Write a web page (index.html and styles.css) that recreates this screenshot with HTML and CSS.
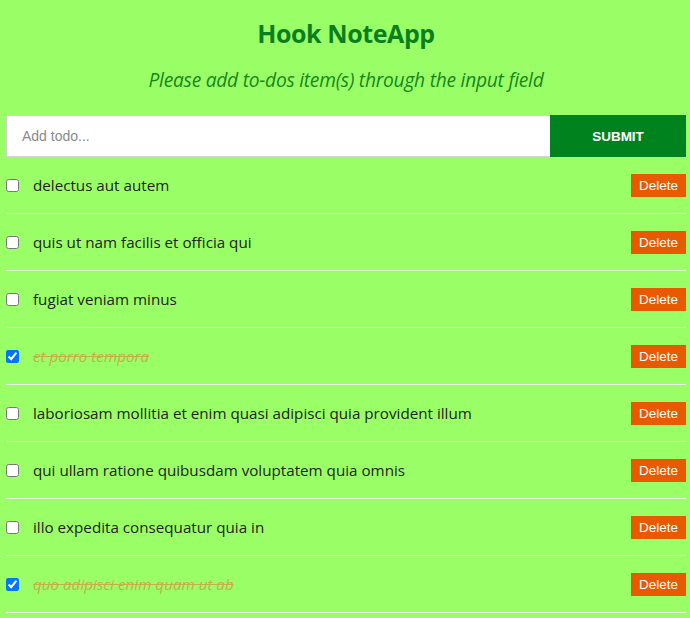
FILE: index.html
```html
<!DOCTYPE html>
<html>
<head>
<meta charset="utf-8">
<title>Hook NoteApp</title>
<link rel="stylesheet" href="styles.css">
</head>
<body>
<div class="container">
  <header class="header">
    <h1 class="title">Hook NoteApp</h1>
    <p class="subtitle">Please add to-dos item(s) through the input field</p>
  </header>
  <form class="form">
    <input class="input" type="text" placeholder="Add todo...">
    <button class="submit" type="button">SUBMIT</button>
  </form>
  <ul class="list">
    <li class="item"><input class="check" type="checkbox"><span class="text">delectus aut autem</span><button class="delete" type="button">Delete</button></li>
    <li class="item"><input class="check" type="checkbox"><span class="text">quis ut nam facilis et officia qui</span><button class="delete" type="button">Delete</button></li>
    <li class="item"><input class="check" type="checkbox"><span class="text">fugiat veniam minus</span><button class="delete" type="button">Delete</button></li>
    <li class="item"><input class="check" type="checkbox" checked><span class="text done">et porro tempora</span><button class="delete" type="button">Delete</button></li>
    <li class="item"><input class="check" type="checkbox"><span class="text">laboriosam mollitia et enim quasi adipisci quia provident illum</span><button class="delete" type="button">Delete</button></li>
    <li class="item"><input class="check" type="checkbox"><span class="text">qui ullam ratione quibusdam voluptatem quia omnis</span><button class="delete" type="button">Delete</button></li>
    <li class="item"><input class="check" type="checkbox"><span class="text">illo expedita consequatur quia in</span><button class="delete" type="button">Delete</button></li>
    <li class="item"><input class="check" type="checkbox" checked><span class="text done">quo adipisci enim quam ut ab</span><button class="delete" type="button">Delete</button></li>
  </ul>
</div>
</body>
</html>
```

FILE: styles.css
```css
html, body {
  margin: 0;
  padding: 0;
  background: #9aff67;
}
body {
  font-family: "Open Sans", "Noto Sans", sans-serif;
  color: #222;
}
.container {
  padding: 0 4px 0 6px;
}
.header {
  text-align: center;
  padding-top: 16px;
}
.title {
  margin: 0;
  font-size: 25px;
  line-height: 34px;
  font-weight: 700;
  color: #0b7f1f;
  letter-spacing: -0.4px;
}
.subtitle {
  margin: 17px 0 0;
  font-size: 19.2px;
  line-height: 26px;
  font-style: italic;
  color: #17861b;
  letter-spacing: -0.25px;
}
.form {
  display: flex;
  margin-top: 22px;
  height: 42px;
}
.input {
  flex: 1;
  box-sizing: border-box;
  height: 42px;
  margin: 0;
  border: 1px solid #d2d2d2;
  border-right: none;
  padding: 0 15px;
  font-family: "Liberation Sans", Arial, sans-serif;
  font-size: 14px;
  background: #fff;
  outline: none;
}
.input::placeholder {
  color: #8a8a8a;
}
.submit {
  width: 136px;
  height: 42px;
  margin: 0;
  border: none;
  background: #00821f;
  color: #fff;
  font-family: "Liberation Sans", Arial, sans-serif;
  font-weight: 700;
  font-size: 13.5px;
  cursor: pointer;
}
.list {
  list-style: none;
  margin: 0;
  padding: 0;
}
.item {
  display: flex;
  align-items: center;
  padding: 17px 0 16px;
  border-bottom: 1px solid #e8f2e0;
}
.check {
  width: 13px;
  height: 13px;
  margin: 0 14px 0 0;
  flex: none;
}
.text {
  flex: 1;
  font-size: 15.2px;
  line-height: 23px;
  color: #222;
}
.text.done {
  font-style: italic;
  text-decoration: line-through;
  color: #c3b048;
}
.delete {
  flex: none;
  width: 55px;
  height: 23px;
  margin: 0;
  padding: 0;
  border: none;
  background: #e85a00;
  color: #fff;
  font-family: "Liberation Sans", Arial, sans-serif;
  font-size: 13.5px;
  cursor: pointer;
}
```
